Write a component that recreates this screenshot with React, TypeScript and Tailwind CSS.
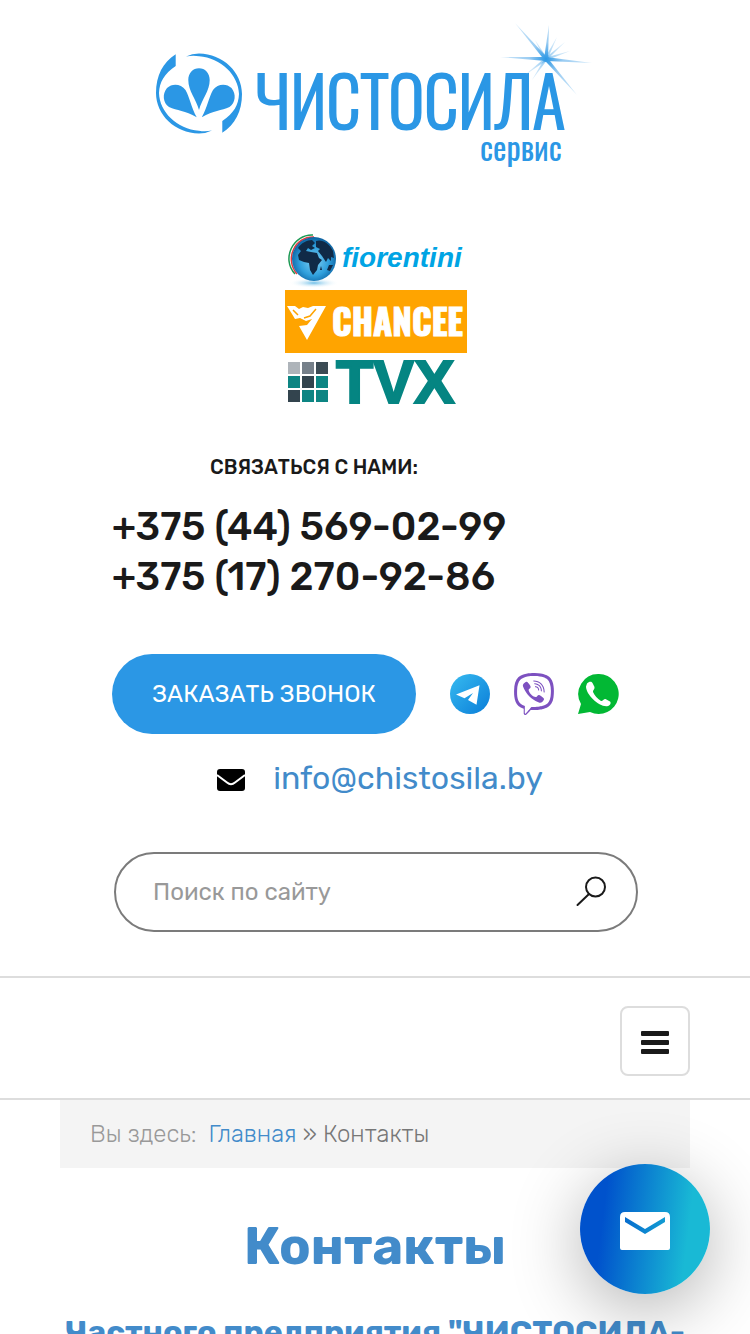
import { ReactNode } from "react";
import { FaViber } from "react-icons/fa";

const NARROW = "'Oswald', 'Roboto Condensed', 'Liberation Sans', sans-serif";

const PHONES = [
  { label: "+375 (44) 569-02-99", href: "tel:+375445690299" },
  { label: "+375 (17) 270-92-86", href: "tel:+375172709286" },
];

/** Rays of the sparkle over the last letter: end points, all from one centre. */
const LONG_RAYS = [
  [360, 3],
  [394, 5],
  [437, 43],
  [422, 75],
  [345, 37],
];
const SHORT_RAYS = [
  [415, 31],
  [410, 22],
  [402, 17],
  [380, 20],
  [370, 55],
  [377, 60],
];

function ray(x: number, y: number, w: number) {
  const cx = 391;
  const cy = 39;
  const len = Math.hypot(x - cx, y - cy);
  const nx = (-(y - cy) / len) * w;
  const ny = ((x - cx) / len) * w;
  return `M${cx + nx} ${cy + ny}L${x} ${y}L${cx - nx} ${cy - ny}Z`;
}

function Logo() {
  return (
    <svg viewBox="0 0 440 150" className="w-[440px] max-w-full" role="img">
      <defs>
        <radialGradient
          id="sparkle"
          gradientUnits="userSpaceOnUse"
          cx="391"
          cy="39"
          r="48"
        >
          <stop offset="0" stopColor="#2b97e5" />
          <stop offset="0.35" stopColor="#9accf2" />
          <stop offset="1" stopColor="#d4eafa" />
        </radialGradient>
        <path
          id="crescent"
          d="M20.700 34.300C8 42 1 56 1 73C1 95 20 113 44 113.500Q51 113.500 57 110.500Q50 112 44 110.800C22 109 4.500 92 4 73C4.500 62 9 54 20.700 46Z"
        />
        <path
          id="petal"
          d="M41.700 97.300C30 90 22 91 14 87C8 83 7 74 12 68C17 63 26 63.500 30.500 70C35 78 36 87 41.700 97.300Z"
        />
      </defs>
      <g fill="#2b97e5">
        <use href="#crescent" />
        <use href="#crescent" transform="rotate(180 44 73.5)" />
        <use href="#petal" />
        <use href="#petal" transform="translate(88.500 0) scale(-1 1)" />
        <path d="M44 90C41 79 33.300 71 33.300 60C33.300 53 38 48.300 44 48.300S54.700 53 54.700 60C54.700 71 47 79 44 90Z" />
        <text
          x="100"
          y="109"
          stroke="#2b97e5"
          strokeWidth="2"
          fontFamily={NARROW}
          fontSize="68"
          fontWeight="300"
        >
          ЧИСТОСИЛА
        </text>
        <text x="325" y="141" fontFamily={NARROW} fontSize="32" fontWeight="400">
          сервис
        </text>
      </g>
      <g fill="url(#sparkle)">
        {LONG_RAYS.map(([x, y]) => (
          <path key={`${x}-${y}`} d={ray(x, y, 2)} />
        ))}
        {SHORT_RAYS.map(([x, y]) => (
          <path key={`${x}-${y}`} d={ray(x, y, 1.5)} opacity="0.5" />
        ))}
        <circle cx="391" cy="39" r="3" />
      </g>
    </svg>
  );
}

function Fiorentini() {
  return (
    <svg viewBox="0 0 182 59" className="w-[182px]" role="img">
      <defs>
        <radialGradient id="globe" cx="0.5" cy="0.55" r="0.55">
          <stop offset="0" stopColor="#7fd0f5" />
          <stop offset="0.6" stopColor="#2f9fdc" />
          <stop offset="1" stopColor="#0b5f9e" />
        </radialGradient>
        <radialGradient id="globeShade">
          <stop offset="0" stopColor="#6fbfe8" />
          <stop offset="1" stopColor="#ffffff" stopOpacity="0" />
        </radialGradient>
      </defs>
      <ellipse cx="29" cy="52" rx="25" ry="5" fill="url(#globeShade)" />
      <path
        d="M28 4C8 3 -4 28 10 43"
        fill="none"
        stroke="#1d9a55"
        strokeWidth="1.500"
      />
      <path
        d="M29 6C10 5 -1 28 12 43"
        fill="none"
        stroke="#e23b3f"
        strokeWidth="1.500"
      />
      <circle cx="29" cy="28" r="22" fill="url(#globe)" />
      <path
        fill="#102a47"
        d="M13 17C16 12 22 9 27 9L30 12L27 15L30 17L26 19L23 17L21 20L26 21L32 22L34 27L37 29L33 34L32 39L28 44L25 39L24 32L19 31L14 29L13 24L16 20ZM31 10C37 8 44 12 48 20L49 27L46 26L46 30L43 27L41 31L37 25L33 20L35 18L31 16ZM44 34L48 34L45 40L42 39ZM36 35L37 39L35 39Z"
      />
      <text
        x="57"
        y="36"
        fill="#00a4e4"
        fontFamily="'Liberation Sans', Arial, sans-serif"
        fontSize="28"
        fontStyle="italic"
        fontWeight="700"
      >
        fiorentini
      </text>
    </svg>
  );
}

function Chancee() {
  return (
    <svg viewBox="0 0 182 63" className="w-[182px] bg-[#ffa400]" role="img">
      <path
        fill="#ffffff"
        d="M2 16L10 16L14 19L18 17L23 18L28 16H41L22 50L14 36L22 35L27 29L21 31L15 28L10 29L7 24Z"
      />
      <path
        fill="none"
        stroke="#ffa400"
        strokeWidth="1.500"
        d="M19 28L25 26L31 19M8 20L13 25"
      />
      <text
        x="47"
        y="46"
        fill="#ffffff"
        stroke="#ffffff"
        fontFamily={NARROW}
        fontSize="35"
        fontWeight="700"
      >
        CHANCEE
      </text>
    </svg>
  );
}

const TILES = [
  ["#aeb4ba", "#76808a", "#3c4b54"],
  ["#0d8583", "#33444e", "#0d8583"],
  ["#33444e", "#0d8583", "#0d8583"],
];

function Tvx() {
  return (
    <svg viewBox="0 0 182 55" className="w-[182px] overflow-visible" role="img">
      {TILES.map((row, r) =>
        row.map((color, c) => (
          <rect
            key={`${r}-${c}`}
            x={3 + c * 14}
            y={9 + r * 14}
            width="12"
            height="12"
            fill={color}
          />
        )),
      )}
      <text
        x="51"
        y="50"
        fill="#058582"
        stroke="#058582"
        strokeWidth="2"
        fontFamily="'Liberation Sans', Arial, sans-serif"
        fontSize="61"
        fontWeight="700"
      >
        TVX
      </text>
    </svg>
  );
}

function TelegramIcon() {
  return (
    <svg viewBox="0 0 42 42" className="size-[42px]">
      <defs>
        <linearGradient id="tg" x1="0" y1="0" x2="1" y2="1">
          <stop offset="0" stopColor="#37bbf0" />
          <stop offset="1" stopColor="#0a7dd8" />
        </linearGradient>
      </defs>
      <circle cx="21" cy="21" r="20" fill="url(#tg)" />
      <path
        fill="#ffffff"
        d="M7 21.500L30.500 12.300L27.500 31.800L19 27L24 20L15.500 25.200Z"
      />
    </svg>
  );
}

function WhatsappIcon() {
  return (
    <svg viewBox="0 0 42 42" className="size-[42px]">
      <path
        fill="#02b834"
        d="M22 1A20 20 0 1 1 13 39L1 41L4 31A20 20 0 0 1 22 1Z"
      />
      <path
        fill="#ffffff"
        d="M10 10.500C12 8.300 14.500 8 15.500 10L17.500 14C18 16 15.500 17.500 16 19C18 23 20 25.500 24 28C25.500 28.500 27 25.500 28.500 26L33 28.500C34.500 30 33 32.500 31 33C23 35 9 22 9 13.500Z"
      />
    </svg>
  );
}

function EnvelopeIcon() {
  return (
    <svg viewBox="0 0 28 22" className="w-7">
      <rect width="28" height="22" rx="3" />
      <path
        d="M0 6L10 13.500Q14 17 18 13.500L28 6"
        fill="none"
        stroke="#ffffff"
        strokeWidth="2"
      />
    </svg>
  );
}

function SearchIcon() {
  return (
    <svg
      viewBox="0 0 30 30"
      className="size-[30px] overflow-visible"
      fill="none"
      stroke="#1a1a1a"
      strokeWidth="2"
      strokeLinecap="round"
    >
      <circle cx="19.500" cy="10" r="9.500" />
      <path d="M13 17L1.500 28" />
    </svg>
  );
}

function Messenger({
  label,
  href,
  children,
}: {
  label: string;
  href: string;
  children: ReactNode;
}) {
  return (
    <a href={href} aria-label={label} className="shrink-0">
      {children}
    </a>
  );
}

function Header() {
  return (
    <header className="flex flex-col items-center px-5 pt-5 pb-11">
      <a href="/" className="flex max-w-full">
        <Logo />
      </a>

      <div className="mt-[61px] flex flex-col pl-0.5">
        <Fiorentini />
        <Chancee />
        <Tvx />
      </div>

      <div className="mt-[45px] flex w-full max-w-[526px] flex-col">
        <p className="w-[404px] max-w-full text-center text-xl leading-7 font-medium">
          СВЯЗАТЬСЯ С НАМИ:
        </p>
        <div className="mt-[21px] flex flex-col text-[39px] leading-[50px] font-medium">
          {PHONES.map((p) => (
            <a key={p.href} href={p.href}>
              {p.label}
            </a>
          ))}
        </div>

        <div className="mt-[52px] flex items-center justify-between">
          <button className="h-20 w-[304px] rounded-full bg-[#2b97e5] text-2xl text-white">
            ЗАКАЗАТЬ ЗВОНОК
          </button>
          <div className="flex items-center gap-[22px] pr-[19px]">
            <Messenger label="Telegram" href="#telegram">
              <TelegramIcon />
            </Messenger>
            <Messenger label="Viber" href="#viber">
              <FaViber className="size-[42px] text-[#7d51c0]" />
            </Messenger>
            <Messenger label="WhatsApp" href="#whatsapp">
              <WhatsappIcon />
            </Messenger>
          </div>
        </div>

        <a
          href="mailto:info@chistosila.by"
          className="mt-5 flex items-center justify-center gap-7 pl-2.5 text-[32px] leading-[48px] text-[#428bca]"
        >
          <span className="pt-1 text-black">
            <EnvelopeIcon />
          </span>
          info@chistosila.by
        </a>

        <form
          className="mt-[50px] ml-0.5 flex h-20 items-center rounded-full border-2 border-[#7b7b7b] pr-[30px] pl-[37px]"
          onSubmit={(e) => e.preventDefault()}
        >
          <input
            type="search"
            aria-label="Поиск по сайту"
            placeholder="Поиск по сайту"
            className="min-w-0 flex-1 bg-transparent text-2xl outline-none placeholder:text-[#999999]"
          />
          <button aria-label="Найти">
            <SearchIcon />
          </button>
        </form>
      </div>
    </header>
  );
}

export default function App() {
  return (
    <div className="h-screen overflow-hidden bg-white font-['Rubik','Roboto',sans-serif] text-[#1a1a1a]">
      <Header />

      <nav className="flex justify-end border-y-2 border-[#dddddd] px-[60px] pt-7 pb-[22px]">
        <button
          aria-label="Меню"
          className="flex size-[70px] items-center justify-center rounded-lg border-2 border-[#dddddd] pt-0.5"
        >
          <svg viewBox="0 0 28 24" className="w-7" fill="#1a1a1a">
            <rect y="1" width="28" height="5" rx="1" />
            <rect y="10" width="28" height="5" rx="1" />
            <rect y="19" width="28" height="5" rx="1" />
          </svg>
        </button>
      </nav>

      <main className="px-[60px]">
        <div className="flex bg-[#f4f4f4] px-[30px] py-4 text-2xl leading-9 font-light text-[#777777]">
          <span className="mr-3 text-[#999999]">Вы здесь:</span>
          <a href="/" className="text-[#428bca]">
            Главная
          </a>
          <span className="mx-1.5">»</span>
          <span>Контакты</span>
        </div>

        <div className="text-center font-bold text-[#428bca]">
          <h1 className="mt-12 text-[52px] leading-[60px]">Контакты</h1>
          <h2 className="mt-9 text-[32px] leading-10 whitespace-nowrap">
            Частного предприятия "ЧИСТОСИЛА-
          </h2>
        </div>
      </main>

      <button
        aria-label="Написать нам"
        className="fixed right-10 bottom-10 flex size-[130px] items-center justify-center rounded-full bg-[linear-gradient(97deg,#0052cc_20%,#19b9d5_80%)] shadow-[0_16px_70px_rgba(0,0,0,0.3)]"
      >
        <svg viewBox="0 0 50 38" className="mt-1 w-[50px]">
          <path
            fill="#ffffff"
            fillRule="evenodd"
            d="M5 0H45Q50 0 50 5V36Q50 38 48 38H2Q0 38 0 36V5Q0 0 5 0ZM5 5V10L25 22L45 10V5L25 17Z"
          />
        </svg>
      </button>
    </div>
  );
}
